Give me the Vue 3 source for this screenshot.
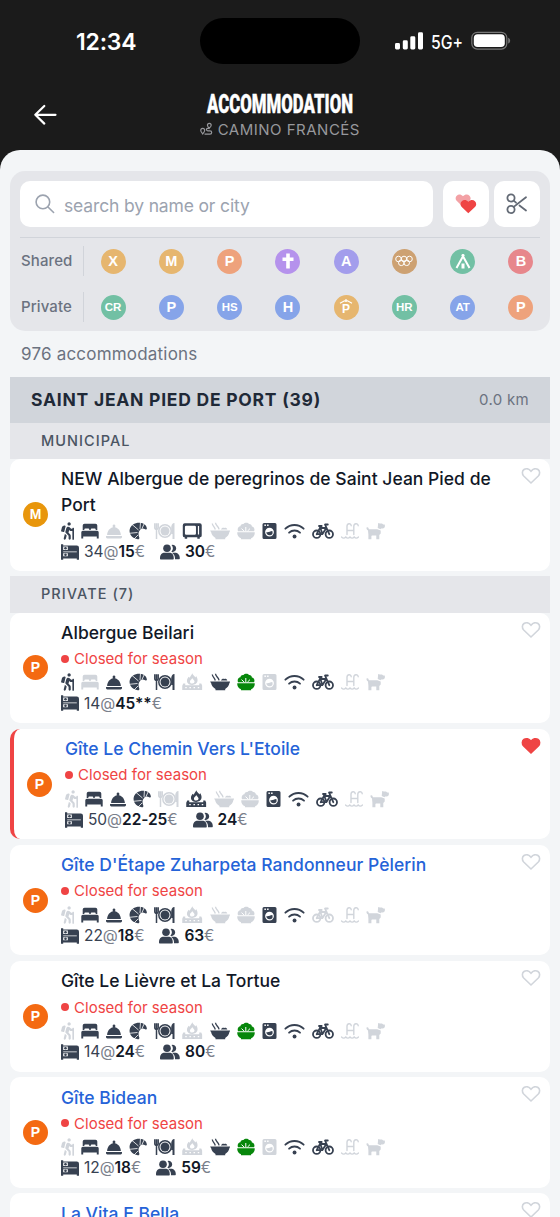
<script setup>
const shared = [
  { t: 'X', c: 'amber' }, { t: 'M', c: 'amber' }, { t: 'P', c: 'orange' }, { i: 'cross', c: 'purple' },
  { t: 'A', c: 'violet' }, { i: 'rings', c: 'brown' }, { i: 'tent', c: 'green' }, { t: 'B', c: 'red' },
]
const priv = [
  { t: 'CR', c: 'green' }, { t: 'P', c: 'blue' }, { t: 'HS', c: 'blue' }, { t: 'H', c: 'blue' },
  { t: 'P', i: 'roof', c: 'amber' }, { t: 'HR', c: 'green' }, { t: 'AT', c: 'blue' }, { t: 'P', c: 'orange' },
]
const filters = [{ label: 'Shared', items: shared }, { label: 'Private', items: priv }]

const sizes = {
  hiker: 13, bed: 18, bell: 16, croissant: 18, plate: 21, microwave: 20.5, fire: 20.5,
  bowl: 20, salad: 18, washer: 15.5, wifi: 21, bike: 22, pool: 18, dog: 19,
}
const names = ['hiker', 'bed', 'bell', 'croissant', 'plate', 'fire', 'bowl', 'salad', 'washer', 'wifi', 'bike', 'pool', 'dog']
const amenities = (flags, kitchen) =>
  names.map((n, i) => ({ name: n === 'fire' && kitchen ? kitchen : n, state: { 0: 'off', 1: 'on', g: 'veg' }[flags[i]] }))

const groups = [
  {
    title: 'MUNICIPAL',
    cards: [
      { badge: 'M', name: 'NEW Albergue de peregrinos de Saint Jean Pied de Port', icons: amenities('1101010011100', 'microwave'), beds: '34', price: '15', rooms: '30' },
    ],
  },
  {
    title: 'PRIVATE (7)',
    cards: [
      { badge: 'P', name: 'Albergue Beilari', closed: true, icons: amenities('1011101g01100'), beds: '14', price: '45**' },
      { badge: 'P', name: "Gîte Le Chemin Vers L'Etoile", closed: true, link: true, fav: true, icons: amenities('0111010011100'), beds: '50', price: '22-25', rooms: '24' },
      { badge: 'P', name: "Gîte D'Étape Zuharpeta Randonneur Pèlerin", closed: true, link: true, icons: amenities('0111100011000'), beds: '22', price: '18', rooms: '63' },
      { badge: 'P', name: 'Gîte Le Lièvre et La Tortue', closed: true, icons: amenities('0111101g11100'), beds: '14', price: '24', rooms: '80' },
      { badge: 'P', name: 'Gîte Bidean', closed: true, link: true, icons: amenities('0111101g01100'), beds: '12', price: '18', rooms: '59' },
      { badge: 'P', name: 'La Vita E Bella', closed: true, link: true, icons: amenities('0111100011100'), beds: '10', price: '20', rooms: '60' },
    ],
  },
]
</script>

<template>
  <div class="app">
    <svg class="sprite" aria-hidden="true">
      <symbol id="hiker" viewBox="0 0 384 512"><path d="M80.95 472.23c-4.28 17.16 6.14 34.53 23.28 38.81 2.61.66 5.22.95 7.8.95 14.33 0 27.37-9.7 31.02-24.23l25.24-100.97-52.78-52.78-34.56 138.22zm14.89-196.12L137 117c2.19-8.42-3.14-16.95-11.92-19.06-43.88-10.52-88.35 15.07-99.32 57.17L.49 253.24c-2.19 8.42 3.14 16.95 11.92 19.06l63.56 15.25c8.79 2.1 17.68-3.02 19.87-11.44zM368 160h-16c-8.84 0-16 7.16-16 16v16h-34.75l-46.78-46.78C243.38 134.11 228.61 128 212.91 128c-27.02 0-50.47 18.3-57.03 44.52l-26.92 107.72a32 32 0 0 0 8.42 30.39L224 397.25V480c0 17.67 14.33 32 32 32s32-14.33 32-32v-82.75c0-17.09-6.66-33.16-18.75-45.25l-46.82-46.82c.15-.5.49-.89.62-1.41l19.89-79.57 22.43 22.43c6 6 14.14 9.38 22.62 9.38h48v240c0 8.84 7.16 16 16 16h16c8.84 0 16-7.16 16-16V176c.01-8.84-7.15-16-15.99-16zM240 96c26.51 0 48-21.49 48-48S266.51 0 240 0s-48 21.49-48 48 21.49 48 48 48z" /></symbol>
      <symbol id="bed" viewBox="0 0 18 18"><path d="M3.500 1.800h11a1.800 1.800 0 0 1 1.800 1.800V8H14.700V7.600a1 1 0 0 0-1-1H10.700a1 1 0 0 0-1 1V8H8.300V7.600a1 1 0 0 0-1-1H4.300a1 1 0 0 0-1 1V8H1.700V3.600A1.800 1.800 0 0 1 3.500 1.800zM1.800 8.700h14.400A1.500 1.500 0 0 1 17.700 10.200V16.500H15.800V14.400H2.200V16.500H.3V10.200A1.500 1.500 0 0 1 1.800 8.700z" /></symbol>
      <symbol id="bell" viewBox="0 0 16 18"><path d="M8 2.500a1.500 1.500 0 0 1 .8 2.700C12.300 5.800 14.700 8.900 14.900 12.900H1.100C1.300 8.900 3.700 5.800 7.200 5.200A1.500 1.500 0 0 1 8 2.500zM0 13.900h16v1.200a1.300 1.300 0 0 1-1.300 1.300H1.300A1.300 1.300 0 0 1 0 15.100z" /></symbol>
      <symbol id="croissant" viewBox="0 0 18 18"><mask id="slices" maskUnits="userSpaceOnUse" x="0" y="0" width="18" height="18"><path fill="#fff" d="M0 0h18v18H0z" /><path d="M9.500 8 2.500 2M11 7l.5-7M13 6.500 15.500 1M8.500 10.500.3 11.300M9 13l-4 4" stroke="#000" stroke-width=".8" /></mask><path mask="url(#slices)" d="M8.800 17.200C3.500 16.500-.2 12.300.7 7.600 1.600 3 6 .4 11 .7c3.500.2 6.700 2.600 6.900 5.800 0 1-.8 1.300-1.700.8-2.200-1.300-4-1-5.200.7-1.600 2-2 4.200-.7 7.400.2 1.200-.3 2-1.500 1.800z" /></symbol>
      <symbol id="plate" viewBox="0 0 21 18"><g fill="none" stroke="currentColor"><circle cx="11" cy="9" r="6.200" stroke-width="1.500" /><path d="M.8 1.200v4.600a1.700 1.700 0 0 0 3.400 0V1.200M2.500 1.200V17" stroke-width="1.500" /></g><circle cx="11" cy="9" r="4.500" /><path d="M20.500 1v16h-2v-5h-1.300V6c0-3 1-5 3.300-5z" /></symbol>
      <symbol id="microwave" viewBox="0 0 21 18"><path fill-rule="evenodd" d="M2.800 1h15.400A2 2 0 0 1 20.200 3v10.500a2 2 0 0 1-2 2V17h-2.500v-1.500H5.300V17H2.800v-1.500a2 2 0 0 1-2-2V3A2 2 0 0 1 2.800 1zM4.300 3.700a1.300 1.300 0 0 0-1.300 1.300v6.600a1.300 1.300 0 0 0 1.300 1.300h8.700a1.300 1.300 0 0 0 1.300-1.300V5a1.300 1.300 0 0 0-1.300-1.300zM16.300 4v8.500h1.200V4z" /></symbol>
      <symbol id="fire" viewBox="0 0 20 18"><path fill-rule="evenodd" d="M10 .2c.6 1.700 2.300 2.800 3.300 4.200.3-.5.500-.9.500-1.300 3 4.100 1.600 8.800-3.800 8.800S3.200 7.400 6.400 3.700l.8 1C8.200 3.100 9.400 2.100 10 .2zm0 4.800C9.600 6.500 7.700 7 7.700 8.700c0 1.200 1 1.900 2.300 1.900s2.300-.8 2.300-2c0-1.500-1.800-2-2.300-3.600z" /><path fill-rule="evenodd" d="M1 10.500h2v1.800h14v-1.800h2l1 2.300V17H0v-4.200zM3 14v1.300h1.500V14zm4.200 0v1.300h1.500V14zm4.100 0v1.300h1.500V14zm4.200 0v1.300H17V14z" /></symbol>
      <symbol id="bowl" viewBox="0 0 20 18"><path d="M.5 8.500h19c.7 0 .7.900 0 1.300-.5 3-2 4.700-4.300 6.100v1.300H5.500v-1.300C3.200 14.500 1.500 12.800 1 9.800.2 9.400 0 8.500.5 8.500zM11 7.500c.6-1.600 2-2 3.300-1.500 1.400-.5 2.700.2 3 1.500z" /><path d="M2.300 1.500c.2 2.500 2.300 3 3 6M5.500.8c.2 2.700 2.900 3.500 3.600 6.500" fill="none" stroke="currentColor" stroke-width="1.300" /></symbol>
      <symbol id="salad" viewBox="0 0 18 18"><path d="M.3 10.200h17.400c.4 2.800-1.200 5.100-3.600 6.100v.9H4v-.9C1.500 15.300-.1 13 .3 10.200zM1 9.200C0 6.700 1.500 4.500 3.400 4.300 3.700 2.300 5.300 1.600 6.500 2 7.500.2 11.200.1 12 2.100c1.500-.2 2.900.9 2.900 2.300 2 .2 3.200 2.600 2.200 4.800z" /><path d="M8.800 9.200V5M7.300 9.200 4.500 6.600M10.400 9.200l2.600-2.600" fill="none" stroke="#fff" stroke-width="1" /></symbol>
      <symbol id="washer" viewBox="0 0 15.5 18"><path fill-rule="evenodd" d="M2 .9h11a1.500 1.500 0 0 1 1.500 1.500v13.200A1.500 1.500 0 0 1 13 17.100H2A1.500 1.500 0 0 1 .5 15.600V2.400A1.500 1.500 0 0 1 2 .9zM2.400 2.600v1.300h1.500V2.600zm2.700 0v1.300h1.500V2.600zM7.500 5.700a4.400 4.400 0 1 0 0 8.800 4.400 4.400 0 0 0 0-8.800zm2.800 3.200c1 2.900-.4 4.400-2.700 4.400-2.100 0-3.400-1.500-3.200-3.300 2 .8 3.500-1 5.900-1.100z" /></symbol>
      <symbol id="wifi" viewBox="0 0 21.5 18"><g fill="none" stroke="currentColor" stroke-width="1.900" stroke-linecap="round"><path d="M1.400 6.600c5.300-5 13.400-5 18.700 0M5.200 10.700c3.200-3 8-3 11.200 0" /></g><circle cx="10.800" cy="14.700" r="2" /></symbol>
      <symbol id="bike" viewBox="0 0 22 18"><g fill="none" stroke="currentColor" stroke-width="1.800" stroke-linejoin="round" stroke-linecap="round"><circle cx="4.700" cy="12.200" r="3.700" /><circle cx="17.300" cy="12.200" r="3.700" /><path d="M4.700 12.200 8 6h6.300l-4 6.200H4.700M7 4h2.700M8 5l2.500 7M17.300 12.200 13 2.500h2.800" /></g></symbol>
      <symbol id="pool" viewBox="0 0 18 18"><path d="M6 12.500V4.300c0-3.300 4.200-3.300 4.200-.5M12.800 12.500V4.300c0-3.300 4.400-3.300 4.400-.5M6 8.500h6.800M.5 15c1.500 1.500 3 1.500 4.300 0 1.300 1.500 2.900 1.500 4.200 0 1.300 1.500 2.900 1.500 4.200 0 1.300 1.500 2.800 1.500 4.300 0" fill="none" stroke="currentColor" stroke-width="1.400" stroke-linecap="round" /></symbol>
      <symbol id="dog" viewBox="0 0 19 18"><path d="M12.200 1 14 1.600h2l1.200 1h1.500c.6 2.300-.1 3.900-2.100 3.900h-1.500l-.6.700-2.800-1.200zM.5 5.500 2 5.200l1 2h8.300l3.400 1.300v3L13.300 13v4.200H10.300v-3.700H6l-.6.500v3.200H2.400v-4.400L2 8.500C1 8 .3 7 .5 5.500z" /></symbol>
      <symbol id="bunk" viewBox="0 0 18 16"><path fill-rule="evenodd" d="M0 .3h2.200v1.200h13.600A2.200 2.200 0 0 1 18 3.700v12h-2.200v-1.200H2.200v1.200H0zM2.200 2.600v3.300h4.600V2.600zM2.200 7.500v.8h13.600v-.8zM2.200 9.200v3h4.600v-3z" /><circle cx="4.500" cy="4.300" r="1.300" /><circle cx="4.500" cy="10.800" r="1.300" /></symbol>
      <symbol id="people" viewBox="0 0 20 16"><circle cx="7" cy="4.300" r="3.800" /><path d="M0 14.500c0-4 2-5.700 4.700-5.700h4.600c2.700 0 4.500 1.700 4.500 5.700 0 .6-.4 1-1 1H1c-.6 0-1-.4-1-1zM11.300 7.700c2.100-1.600 2-5 .2-6.800a3.600 3.600 0 1 1-.2 6.800zM12 8.800h2.800c3 0 5 1.900 5 5.400 0 .7-.3 1.100-1 1.100H15c.2-2.700-.8-5-3-6.500z" /></symbol>
      <symbol id="heart" viewBox="0 0 20 18"><path d="M10 16 2.700 9C.8 7 1 4 3 2.500 5 1.100 8 1.700 10 4.200c2-2.500 5-3.100 7-1.700 2 1.500 2.200 4.500.3 6.500z" /></symbol>
    </svg>

    <header class="top">
      <div class="status">
        <span class="clock">12:34</span>
        <span class="island"></span>
        <span class="signals">
          <svg width="29" height="18" viewBox="0 0 29 18" fill="#fff"><rect x="0" y="11" width="5" height="6.500" rx="1.400" /><rect x="7.800" y="8.300" width="5" height="9.200" rx="1.400" /><rect x="15.300" y="4.300" width="5" height="13.200" rx="1.400" /><rect x="23" y=".3" width="5" height="17.200" rx="1.400" /></svg>
          <svg class="net" width="36" height="28" viewBox="0 0 36 28"><text x="2" y="20.500" textLength="32" lengthAdjust="spacingAndGlyphs">5G+</text></svg>
          <svg width="40" height="20" viewBox="0 0 40 20"><rect x=".8" y="1.300" width="35" height="16.800" rx="5.500" fill="none" stroke="#777" stroke-width="1.200" /><rect x="2.800" y="3.300" width="31" height="12.800" rx="3.800" fill="#fff" /><path d="M37.200 6.800c2.600.8 2.600 5 0 5.800z" fill="#777" /></svg>
        </span>
      </div>
      <div class="nav">
        <svg class="back" width="24" height="22" viewBox="0 0 24 22" fill="none" stroke="#fff" stroke-width="2.200" stroke-linecap="round" stroke-linejoin="round"><path d="M22.500 10.800H2.300M11.300 2 2.300 10.800l9 8.800" /></svg>
        <div class="heading">
          <svg class="title" width="156" height="36" viewBox="0 0 156 36"><text x="5" y="27" textLength="146" lengthAdjust="spacingAndGlyphs">ACCOMMODATION</text></svg>
          <div class="route">
            <svg width="14" height="14" viewBox="0 0 14 14" fill="none" stroke="#97989c" stroke-width="1.300"><path d="M3 12.500 1.200 9.800C.3 7.500 1.500 6.300 3 6.300s2.700 1.200 1.800 3.500zM10.200 6.300 8.600 4c-.9-2 .2-3.200 1.700-3.200s2.600 1.200 1.700 3.200zH8.600c-2 0-2 2.700 0 2.700H11c2.600 0 2.600 3.700 0 3.700H5" /></svg>
            <span>CAMINO FRANCÉS</span>
          </div>
        </div>
      </div>
    </header>

    <main>
      <section class="panel">
        <div class="tools">
          <div class="search">
            <svg width="20" height="20" viewBox="0 0 20 20" fill="none" stroke="#9ca3af" stroke-width="1.600" stroke-linecap="round"><circle cx="7.900" cy="7.900" r="6.800" /><path d="m13 13 5.600 5.500" /></svg>
            <span>search by name or city</span>
          </div>
          <button class="tool">
            <svg width="22" height="20" viewBox="0 0 22 20"><path d="M8 13 1.400 6.600C-1.400 2.800 4-2.200 8 2.300c4-4.500 9.700.3 6.900 4.300z" fill="#f3a1a5" /><path d="m13.300 19.300-6.800-6.600C3.300 9 8.800 3.200 13.300 7.700c4.700-4.500 10.200 1.300 6.900 5z" fill="#ef4444" /></svg>
          </button>
          <button class="tool">
            <svg width="22" height="22" viewBox="0 0 22 22" fill="none" stroke="#636a75" stroke-width="1.800" stroke-linecap="round"><circle cx="5" cy="5" r="3.600" /><circle cx="5" cy="16.500" r="3.600" /><path d="M7.700 7.600 10 9.600M7.700 13.900 20 4.200M13.500 12.500l6.500 5" /></svg>
          </button>
        </div>
        <div v-for="row in filters" :key="row.label" class="filter">
          <span class="label">{{ row.label }}</span>
          <div class="chips">
            <div v-for="(f, i) in row.items" :key="i" class="slot">
              <span class="chip" :class="[f.c, { two: f.t && f.t.length > 1, roofed: f.i === 'roof' }]">
                <svg v-if="f.i === 'cross'" width="14" height="18" viewBox="0 0 14 18" fill="#fff"><path d="M5.200 1.500h3.600v4h3.700V9H8.800v7.500H5.200V9H1.500V5.500h3.700z" /></svg>
                <svg v-if="f.i === 'rings'" width="18" height="12" viewBox="0 0 18 12" fill="none" stroke="#fff" stroke-width="1"><circle cx="3.500" cy="4" r="2.800" /><circle cx="9" cy="4" r="2.800" /><circle cx="14.500" cy="4" r="2.800" /><circle cx="6.300" cy="7.800" r="2.800" /><circle cx="11.700" cy="7.800" r="2.800" /></svg>
                <svg v-if="f.i === 'tent'" width="18" height="17" viewBox="0 0 18 17"><path d="M8 1.500 15.500 15M10 1.500 2.500 15" fill="none" stroke="#fff" stroke-width="2" /><path d="M7.500 10.500h3V15.500h-3z" fill="#fff" /></svg>
                <svg v-if="f.i === 'roof'" class="roof" width="14" height="5" viewBox="0 0 14 5" fill="none" stroke="#fff" stroke-width="1.200"><path d="M1 4.300 5.500 1.800h3L13 4.300M7 0v3" /></svg>
                <span v-if="f.t">{{ f.t }}</span>
              </span>
            </div>
          </div>
        </div>
      </section>

      <p class="count">976 accommodations</p>

      <div class="city"><h2>SAINT JEAN PIED DE PORT (39)</h2><span>0.0 km</span></div>
      <section v-for="g in groups" :key="g.title" class="group">
        <h3>{{ g.title }}</h3>
        <article v-for="c in g.cards" :key="c.name" class="card" :class="{ fav: c.fav }">
          <span class="badge" :class="{ municipal: c.badge === 'M' }">{{ c.badge }}</span>
          <div class="body">
            <h4 :class="{ link: c.link }">{{ c.name }}</h4>
            <div v-if="c.closed" class="closed"><i></i>Closed for season</div>
            <div class="icons">
              <svg v-for="a in c.icons" :key="a.name" :class="a.state" :width="sizes[a.name]" height="18"><use :href="'#' + a.name" /></svg>
            </div>
            <div class="facts">
              <svg width="18" height="16"><use href="#bunk" /></svg>
              <span class="fact">{{ c.beds }}<em>@</em><b>{{ c.price }}</b><em>€</em></span>
              <template v-if="c.rooms">
                <svg class="people" width="20" height="16"><use href="#people" /></svg>
                <span class="fact"><b>{{ c.rooms }}</b><em>€</em></span>
              </template>
            </div>
          </div>
          <svg class="heart" width="20" height="18"><use href="#heart" /></svg>
        </article>
      </section>
    </main>
  </div>
</template>

<style>
html, body { overflow: hidden; background: #1b1b1b; }
</style>

<style scoped>
* { box-sizing: border-box; }
.app { height: 1217px; overflow: hidden; background: #1b1b1b; font-family: Inter, "Liberation Sans", sans-serif; color: #111827; }
.sprite { position: absolute; width: 0; height: 0; }
.top { height: 150px; color: #fff; }
.status { height: 82px; display: grid; grid-template-columns: 200px 160px 200px; align-items: center; }
.clock { padding: 2px 0 0 76px; font-size: 23px; font-weight: 600; letter-spacing: -0.2px; }
.island { height: 46px; border-radius: 23px; background: #000; }
.signals { display: flex; align-items: center; padding-left: 35px; }
.net { margin: 2px 6px 0 5px; overflow: visible; }
.net text { font: 500 18px Inter, sans-serif; fill: #fff; }
.nav { height: 68px; display: grid; grid-template-columns: 200px 160px 200px; }
.back { margin: 22px 0 0 33px; }
.heading { padding-top: 4px; text-align: center; }
.title { display: block; margin: 0 auto; overflow: visible; }
.title text { font: 900 25px Roboto, sans-serif; fill: #fff; stroke: #fff; stroke-width: .4px; }
.route { display: flex; align-items: center; justify-content: center; gap: 5px; height: 20px; margin-top: -3px; font-size: 15px; letter-spacing: .5px; color: #97989c; white-space: nowrap; }
main { height: 1067px; overflow: hidden; padding: 21px 10px 0; border-radius: 20px 20px 0 0; background: #f3f5f7; }
.panel { height: 159.500px; padding: 10px 10px 0; border-radius: 15px; background: #e5e6ea; }
.tools { display: flex; gap: 5px; padding-bottom: 10px; border-bottom: 1px solid #d1d4da; }
.search { flex: 1; height: 46px; margin-right: 5px; padding-left: 15px; display: flex; align-items: center; gap: 9px; border-radius: 10px; background: #fff; color: #9ca3af; font-size: 17.500px; letter-spacing: -.15px; }
.search span { padding-top: 3px; }
.tool { width: 46px; height: 46px; padding: 0; border: 0; border-radius: 10px; background: #fff; display: flex; align-items: center; justify-content: center; }
.filter { height: 46px; display: flex; align-items: center; }
.label { width: 64px; height: 30px; padding-left: 1px; border-right: 1px solid #d1d4da; font-size: 15px; font-weight: 500; letter-spacing: .1px; line-height: 30px; color: #6b7280; }
.chips { flex: 1; display: flex; margin-right: -10px; }
.slot { flex: 1; display: flex; justify-content: center; }
.chip { width: 25px; height: 25px; border-radius: 50%; display: flex; flex-direction: column; align-items: center; justify-content: center; color: #fff; font: 700 14.500px/14px "Liberation Sans", sans-serif; }
.two { font-size: 11.500px; }
.roofed { font-size: 12px; line-height: 11px; }
.amber { background: #e6b66f; } .orange { background: #eea27c; } .purple { background: #b592ec; }
.violet { background: #a39dec; } .brown { background: #cda172; } .green { background: #72c0a4; }
.red { background: #e7878c; } .blue { background: #86a4e9; }
.count { margin: 0; height: 46.500px; padding-left: 11px; font-size: 17px; letter-spacing: .2px; line-height: 47px; color: #6b7280; }
.city { height: 45.500px; padding: 0 21px; display: flex; align-items: center; justify-content: space-between; background: #d1d5db; }
.city h2 { margin: 0; font-size: 17.500px; font-weight: 700; letter-spacing: .76px; color: #1f2937; }
.city span { font-size: 15px; letter-spacing: .3px; color: #6b7280; }
h3 { margin: 0; height: 36.300px; padding-left: 31px; background: #e5e6ea; color: #4b5563; font-size: 14.500px; font-weight: 500; line-height: 36px; letter-spacing: 1.050px; }
.card { position: relative; display: flex; min-height: 110.600px; margin-bottom: 5.500px; padding: 7.500px 0 8.500px; border-radius: 10px; background: #fff; }
.group:nth-of-type(2) .card { padding-bottom: 9px; }
.fav { border-left: 4px solid #ef4444; }
.badge { align-self: center; width: 25px; height: 25px; margin: 1px 13px 0; border-radius: 50%; background: #f46a12; color: #fff; text-align: center; font: 700 14px/25px "Liberation Sans", sans-serif; }
.municipal { background: #e8960c; }
.body { flex: 1; padding-right: 40px; }
h4 { margin: 0; font-size: 17.500px; font-weight: 500; line-height: 25.800px; letter-spacing: .03px; color: #111827; }
.link { color: #2563d8; }
.closed { height: 25.500px; display: flex; align-items: center; gap: 5px; font-size: 15px; color: #ef4444; letter-spacing: .02px; }
.closed i { width: 8px; height: 8px; border-radius: 50%; background: #ef4444; }
.icons { display: flex; align-items: center; gap: 7px; height: 22px; }
h4 + .icons { margin-top: 2px; }
.icons svg { flex: none; fill: currentColor; }
.on { color: #374151; } .off { color: #d1d5db; } .veg { color: #07870b; }
.facts { display: flex; align-items: center; height: 20px; font-size: 15.500px; letter-spacing: -.05px; }
.facts svg { fill: #374151; }
.fact { margin-left: 5px; color: #374151; }
.fact b { font-weight: 600; color: #111827; }
.fact em { font-style: normal; color: #7a808b; }
.people { margin-left: 15px; }
.heart { position: absolute; top: 8px; right: 9px; fill: none; stroke: #d1d5db; stroke-width: 1.600; overflow: visible; }
.fav .heart { fill: #ef4444; stroke: #ef4444; }
</style>
